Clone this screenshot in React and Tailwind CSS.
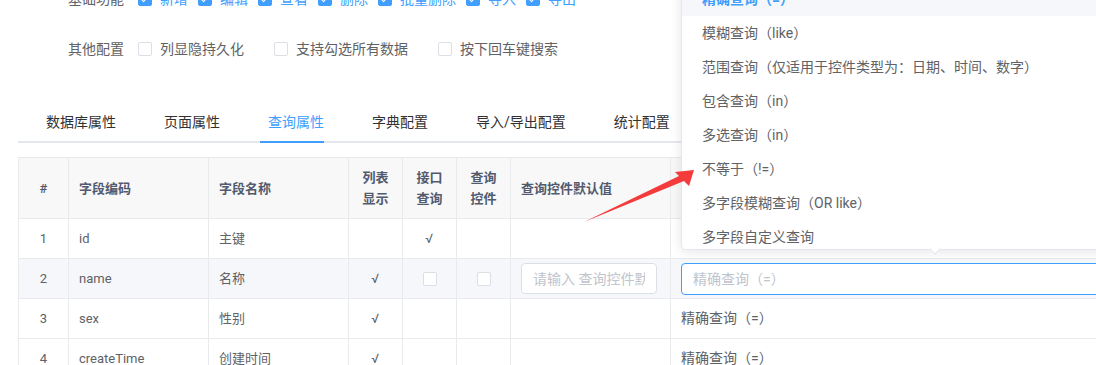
import React from "react";

const basicItems = ["新增", "编辑", "查看", "删除", "批量删除", "导入", "导出"];
const otherItems = ["列显隐持久化", "支持勾选所有数据", "按下回车键搜索"];
const tabs = ["数据库属性", "页面属性", "查询属性", "字典配置", "导入/导出配置", "统计配置"];

const options = [
    "精确查询（=）",
    "模糊查询（like）",
    "范围查询（仅适用于控件类型为：日期、时间、数字）",
    "包含查询（in）",
    "多选查询（in）",
    "不等于（!=）",
    "多字段模糊查询（OR like）",
    "多字段自定义查询",
];

const rows = [
    { no: 1, code: "id", name: "主键", list: "", api: "√" },
    { no: 2, code: "name", name: "名称", list: "√", editing: true },
    { no: 3, code: "sex", name: "性别", list: "√", api: "" },
    { no: 4, code: "createTime", name: "创建时间", list: "√", api: "" },
];

function Checkbox({ checked }) {
    if (checked) {
        return (
            <span className="w-[14px] h-[14px] rounded-[2px] bg-[#409eff] border border-[#409eff] flex items-center justify-center shrink-0">
                <span className="w-[4px] h-[8px] border-r-[1.5px] border-b-[1.5px] border-white rotate-45 -mt-[2px]" />
            </span>
        );
    }
    return <span className="w-[14px] h-[14px] rounded-[2px] bg-white border border-[#dcdfe6] shrink-0 block" />;
}

export default function App() {
    return (
        <div className="relative w-[1096px] h-[365px] overflow-hidden bg-white text-[14px] text-[#606266] font-['Roboto','Noto_Sans_CJK_SC',sans-serif]">
            <div className="-mt-[18px]">
                {/* 基础功能 */}
                <div className="flex items-center h-[34px] pl-[68px]">
                    <span className="w-[56px] mr-[14px] whitespace-nowrap">基础功能</span>
                    {basicItems.map((item) => (
                        <label key={item} className="flex items-center mr-[10px]">
                            <Checkbox checked />
                            <span className="ml-[8px] text-[#409eff] whitespace-nowrap">{item}</span>
                        </label>
                    ))}
                </div>

                {/* 其他配置 */}
                <div className="flex items-center h-[34px] pl-[68px] mt-[16px]">
                    <span className="w-[56px] mr-[14px] whitespace-nowrap">其他配置</span>
                    {otherItems.map((item) => (
                        <label key={item} className="flex items-center mr-[30px]">
                            <Checkbox />
                            <span className="ml-[8px] whitespace-nowrap">{item}</span>
                        </label>
                    ))}
                </div>

                {/* tabs */}
                <div className="mt-[38px] ml-[18px] flex pl-[4px] border-b-2 border-[#e4e7ed]">
                    {tabs.map((tab, index) => (
                        <div
                            key={tab}
                            className={
                                "relative h-[37px] px-[24px] flex items-center whitespace-nowrap" +
                                (index === 2 ? " text-[#409eff]" : " text-[#303133]")
                            }
                        >
                            {tab}
                            {index === 2 && (
                                <span className="absolute left-[16px] right-[24px] -bottom-[2px] h-[2px] bg-[#409eff]" />
                            )}
                        </div>
                    ))}
                </div>

                {/* table */}
                <table className="mt-[14px] ml-[18px] table-fixed border-collapse w-[1252px] text-[13px]">
                    <colgroup>
                        <col className="w-[50px]" />
                        <col className="w-[140px]" />
                        <col className="w-[140px]" />
                        <col className="w-[54px]" />
                        <col className="w-[54px]" />
                        <col className="w-[54px]" />
                        <col className="w-[160px]" />
                        <col className="w-[600px]" />
                    </colgroup>
                    <thead>
                        <tr className="h-[61px] bg-[#f8f8f9] text-[#515a6e] font-semibold leading-[21px]">
                            <th className="border border-[#e8eaec] text-center font-semibold">#</th>
                            <th className="border border-[#e8eaec] text-left px-[10px] font-semibold">字段编码</th>
                            <th className="border border-[#e8eaec] text-left px-[10px] font-semibold">字段名称</th>
                            <th className="border border-[#e8eaec] text-center font-semibold">列表<br />显示</th>
                            <th className="border border-[#e8eaec] text-center font-semibold">接口<br />查询</th>
                            <th className="border border-[#e8eaec] text-center font-semibold">查询<br />控件</th>
                            <th className="border border-[#e8eaec] text-left px-[10px] font-semibold whitespace-nowrap">查询控件默认值</th>
                            <th className="border border-[#e8eaec] text-left px-[10px] font-semibold">查询条件</th>
                        </tr>
                    </thead>
                    <tbody>
                        {rows.map((row) => (
                            <tr key={row.no} className={"h-[40px]" + (row.editing ? " bg-[#f5f7fa]" : "")}>
                                <td className="border border-[#e8eaec] text-center">{row.no}</td>
                                <td className="border border-[#e8eaec] px-[10px]">{row.code}</td>
                                <td className="border border-[#e8eaec] px-[10px]">{row.name}</td>
                                <td className="border border-[#e8eaec] text-center">{row.list}</td>
                                <td className="border border-[#e8eaec]">
                                    {row.editing ? (
                                        <div className="flex justify-center"><Checkbox /></div>
                                    ) : (
                                        <div className="text-center">{row.api}</div>
                                    )}
                                </td>
                                <td className="border border-[#e8eaec]">
                                    {row.editing && <div className="flex justify-center"><Checkbox /></div>}
                                </td>
                                <td className="border border-[#e8eaec] pl-[10px] pr-[13px]">
                                    {row.editing && (
                                        <input
                                            readOnly
                                            placeholder="请输入 查询控件默认值"
                                            className="w-full h-[31px] rounded-[4px] border border-[#dcdfe6] bg-white px-[11px] text-[14px] outline-none placeholder:text-[#c0c4cc]"
                                        />
                                    )}
                                </td>
                                <td className="border border-[#e8eaec] px-[10px] text-[14px]">
                                    {row.editing ? (
                                        <input
                                            readOnly
                                            placeholder="精确查询（=）"
                                            className="w-full h-[32px] rounded-[4px] border border-[#409eff] bg-white px-[11px] text-[14px] outline-none placeholder:text-[#c0c4cc]"
                                        />
                                    ) : (
                                        "精确查询（=）"
                                    )}
                                </td>
                            </tr>
                        ))}
                    </tbody>
                </table>
            </div>

            {/* select dropdown */}
            <div className="absolute left-[681px] -top-[20px] w-[600px] h-[270px] bg-white border border-[#e4e7ed] rounded-[4px] shadow-[0_2px_12px_0_rgba(0,0,0,0.1)] overflow-hidden">
                <ul className="pt-[1px]">
                    {options.map((opt, index) => (
                        <li
                            key={opt}
                            className={
                                "h-[34px] leading-[34px] px-[20px] whitespace-nowrap" +
                                (index === 0 ? " bg-[#f5f7fa] text-[#409eff] font-bold" : "")
                            }
                        >
                            {opt}
                        </li>
                    ))}
                </ul>
            </div>
            <span className="absolute left-[931px] top-[245px] w-[8px] h-[8px] bg-white border-r border-b border-[#e4e7ed] rotate-45" />

            {/* red arrow */}
            <svg className="absolute left-0 top-0 pointer-events-none" width="1096" height="365">
                <polygon points="584,222 679,176 675,172 694,170 689,186 684,181" fill="#f43b3b" />
            </svg>
        </div>
    );
}
